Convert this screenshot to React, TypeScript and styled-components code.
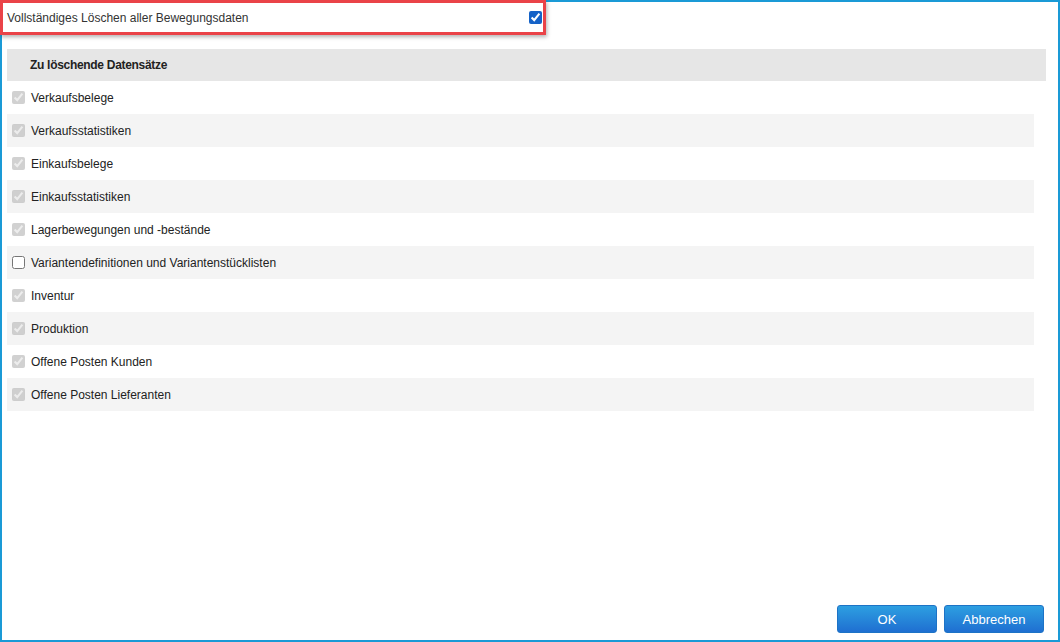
import React from "react";
import styled, { createGlobalStyle } from "styled-components";

const GlobalStyle = createGlobalStyle`
  html, body {
    margin: 0;
    padding: 0;
    background: #fff;
  }
  body {
    font-family: "Liberation Sans", Arial, sans-serif;
  }
`;

export const Frame = styled.div`
  width: 1060px;
  height: 642px;
  box-sizing: border-box;
  border: 2px solid #1a9ad6;
  display: flex;
  flex-direction: column;
  background: #fff;
`;

export const Highlight = styled.label`
  display: flex;
  align-items: center;
  justify-content: space-between;
  box-sizing: border-box;
  width: 546px;
  height: 35px;
  margin: -2px 0 0 -2px;
  padding: 0 1px 0 4px;
  border: 3px solid #ea4348;
  box-shadow: 1px 2px 4px rgba(0, 0, 0, 0.3);
  background: #fff;
  font-size: 12px;
  color: #333;
  position: relative;
`;

export const TopCheck = styled.input`
  width: 13px;
  height: 13px;
  margin: 0;
  accent-color: #2b7de9;
`;

export const Content = styled.div`
  flex: 1;
  display: flex;
  flex-direction: column;
  padding: 14px 12px 0 5px;
`;

export const Header = styled.div`
  height: 32px;
  display: flex;
  align-items: center;
  padding-left: 23px;
  background: #e6e6e6;
  font-size: 12px;
  font-weight: bold;
  letter-spacing: -0.3px;
  color: #222;
`;

export const List = styled.div`
  display: flex;
  flex-direction: column;
  margin-right: 12px;
`;

export const Row = styled.label<{ $striped: boolean }>`
  height: 33px;
  display: flex;
  align-items: center;
  gap: 6px;
  padding-left: 5px;
  background: ${(p) => (p.$striped ? "#f4f4f4" : "#fff")};
  font-size: 12px;
  color: #222;
`;

export const RowCheck = styled.input`
  width: 13px;
  height: 13px;
  margin: 0;
`;

export const Footer = styled.div`
  display: flex;
  justify-content: flex-end;
  gap: 7px;
  padding: 0 14px 7px 0;
`;

export const Button = styled.button`
  width: 100px;
  height: 28px;
  border: 1px solid #1d73c6;
  border-radius: 3px;
  background: linear-gradient(to bottom, #2d9fe1, #1f6fd1);
  color: #fff;
  font-family: "Liberation Sans", Arial, sans-serif;
  font-size: 13px;
  cursor: pointer;
`;

const items = [
  { label: "Verkaufsbelege", checked: true },
  { label: "Verkaufsstatistiken", checked: true },
  { label: "Einkaufsbelege", checked: true },
  { label: "Einkaufsstatistiken", checked: true },
  { label: "Lagerbewegungen und -bestände", checked: true },
  { label: "Variantendefinitionen und Variantenstücklisten", checked: false },
  { label: "Inventur", checked: true },
  { label: "Produktion", checked: true },
  { label: "Offene Posten Kunden", checked: true },
  { label: "Offene Posten Lieferanten", checked: true },
];

const App: React.FC = () => {
  return (
    <>
      <GlobalStyle />
      <Frame>
        <Highlight>
          Vollständiges Löschen aller Bewegungsdaten
          <TopCheck type="checkbox" defaultChecked />
        </Highlight>
        <Content>
          <Header>Zu löschende Datensätze</Header>
          <List>
            {items.map((item, index) => (
              <Row key={item.label} $striped={index % 2 === 1}>
                {item.checked ? (
                  <RowCheck type="checkbox" checked disabled readOnly />
                ) : (
                  <RowCheck type="checkbox" />
                )}
                {item.label}
              </Row>
            ))}
          </List>
        </Content>
        <Footer>
          <Button type="button">OK</Button>
          <Button type="button">Abbrechen</Button>
        </Footer>
      </Frame>
    </>
  );
};

export default App;
